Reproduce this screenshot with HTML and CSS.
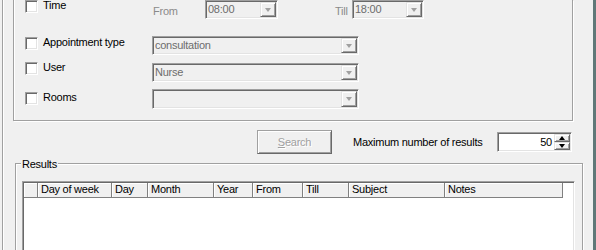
FILE: index.html
```html
<!DOCTYPE html>
<html>
<head>
  <meta charset="UTF-8">
  <title>Appointment search</title>
  <link rel="stylesheet" href="styles.css">
</head>
<body>
  <div class="dialog">
    <div class="groupbox">
      <div class="row row-time">
        <label class="option"><span class="check"></span><span class="caption">Time</span></label>
        <span class="muted from-label">From</span>
        <div class="combo w-from"><span class="value">08:00</span><span class="drop"></span></div>
        <span class="muted till-label">Till</span>
        <div class="combo w-till"><span class="value">18:00</span><span class="drop"></span></div>
      </div>
      <div class="row row-type">
        <label class="option"><span class="check"></span><span class="caption">Appointment type</span></label>
        <div class="combo w-wide"><span class="value">consultation</span><span class="drop"></span></div>
      </div>
      <div class="row row-user">
        <label class="option"><span class="check"></span><span class="caption">User</span></label>
        <div class="combo w-wide"><span class="value">Nurse</span><span class="drop"></span></div>
      </div>
      <div class="row row-rooms">
        <label class="option"><span class="check"></span><span class="caption">Rooms</span></label>
        <div class="combo w-wide"><span class="value"></span><span class="drop"></span></div>
      </div>
    </div>

    <div class="search-row">
      <button class="btn" disabled><u>S</u>earch</button>
      <span class="max-label">Maximum number of results</span>
      <div class="spin">
        <span class="spin-value">50</span>
        <span class="spin-buttons"><span class="spin-up"></span><span class="spin-down"></span></span>
      </div>
    </div>

    <fieldset class="results">
      <legend>Results</legend>
      <div class="listview">
        <div class="lv-header">
          <span class="lv-col" style="width:14px"></span>
          <span class="lv-col" style="width:74px">Day of week</span>
          <span class="lv-col" style="width:36px">Day</span>
          <span class="lv-col" style="width:66px">Month</span>
          <span class="lv-col" style="width:39px">Year</span>
          <span class="lv-col" style="width:50px">From</span>
          <span class="lv-col" style="width:46px">Till</span>
          <span class="lv-col" style="width:96px">Subject</span>
          <span class="lv-col" style="width:118px">Notes</span>
        </div>
      </div>
    </fieldset>
  </div>
</body>
</html>
```

FILE: styles.css
```css
html, body {
  height: 250px;
}
body {
  margin: 0;
  background: #f0f0f0;
  font-family: "Liberation Sans", Arial, sans-serif;
  font-size: 11px;
  letter-spacing: -0.25px;
  color: #000;
  overflow: hidden;
}
.dialog {
  margin-left: 2px;
  width: 590px;
  height: 250px;
  overflow: hidden;
  border-left: 1px solid #a0a0a0;
  border-right: 3px solid #607878;
  box-shadow: inset 1px 0 0 #fff;
}
.groupbox {
  margin-left: 10px;
  width: 560px;
  box-sizing: border-box;
  border: 1px solid #a0a0a0;
  border-top: none;
  box-shadow: inset 1px 0 0 #fff, 1px 1px 0 #fff;
  padding: 0 0 11px 11px;
}
.row {
  display: flex;
  align-items: flex-start;
}
.row-time { height: 36px; }
.row-type { height: 27px; }
.row-user { height: 26px; }
.row-rooms { height: 20px; }
.option {
  display: flex;
  align-items: flex-start;
  width: 127px;
  flex: none;
}
.row-time .option { margin-top: -1px; }
.row-user .option { margin-top: -2px; }
.row-rooms .option { margin-top: 2px; }
.check {
  width: 13px;
  height: 13px;
  box-sizing: border-box;
  margin-top: 1px;
  background: #fff;
  border: 1px solid;
  border-color: #a0a0a0 #fff #fff #a0a0a0;
  box-shadow: inset 1px 1px 0 #696969, inset -1px -1px 0 #e3e3e3;
}
.caption {
  margin-left: 5px;
  line-height: 13px;
}
.muted {
  color: #8a8a8a;
  line-height: 13px;
  margin-top: 5px;
}
.from-label {
  margin-left: 1px;
  width: 52px;
}
.till-label {
  margin-left: 57px;
  width: 17px;
}
.combo {
  display: flex;
  box-sizing: border-box;
  height: 19px;
  padding: 1px;
  border: 1px solid;
  border-color: #a0a0a0 #fff #fff #a0a0a0;
  box-shadow: inset 1px 1px 0 #696969, inset -1px -1px 0 #e3e3e3;
  color: #6d6d6d;
}
.w-from { width: 73px; }
.w-till { width: 72px; }
.w-wide { width: 207px; }
.row-rooms .combo { height: 20px; }
.combo .value {
  flex: 1;
  padding-left: 1px;
  line-height: 15px;
}
.drop, .spin-up, .spin-down {
  display: flex;
  align-items: center;
  justify-content: center;
  box-sizing: border-box;
  background: #f0f0f0;
  border: 1px solid;
  border-color: #e3e3e3 #696969 #696969 #e3e3e3;
  box-shadow: inset 1px 1px 0 #fff, inset -1px -1px 0 #a0a0a0;
}
.drop {
  width: 16px;
}
.drop::after {
  content: "";
  border-style: solid;
  border-width: 4px 3.5px 0;
  border-color: #a0a0a0 transparent transparent;
}
.search-row {
  display: flex;
  align-items: center;
  height: 24px;
  margin-top: 9px;
  padding-left: 254px;
}
.btn {
  width: 75px;
  height: 24px;
  padding: 0;
  font: inherit;
  letter-spacing: inherit;
  color: #a0a0a0;
  text-shadow: 1px 1px 0 #fff;
  background: #f0f0f0;
  border: 1px solid;
  border-color: #a0a0a0 #696969 #696969 #a0a0a0;
  box-shadow: inset 1px 1px 0 #fff, inset -1px -1px 0 #a0a0a0;
}
.max-label {
  margin-left: 21px;
  width: 144px;
}
.spin {
  display: flex;
  box-sizing: border-box;
  width: 75px;
  height: 20px;
  padding: 1px;
  background: #fff;
  border: 1px solid;
  border-color: #a0a0a0 #fff #fff #a0a0a0;
  box-shadow: inset 1px 1px 0 #696969, inset -1px -1px 0 #e3e3e3;
}
.spin-value {
  flex: 1;
  text-align: right;
  padding-right: 2px;
  line-height: 16px;
}
.spin-buttons {
  display: flex;
  flex-direction: column;
  width: 16px;
}
.spin-up, .spin-down {
  flex: 1;
}
.spin-up::after, .spin-down::after {
  content: "";
  border-style: solid;
  border-color: transparent;
}
.spin-up::after {
  border-width: 0 3.5px 4px;
  border-bottom-color: #000;
}
.spin-down::after {
  border-width: 4px 3.5px 0;
  border-top-color: #000;
}
.results {
  margin: 2px 0 0 12px;
  width: 568px;
  height: 110px;
  box-sizing: border-box;
  padding: 10px 7px 0 6px;
  border: 1px solid #a0a0a0;
  box-shadow: inset 1px 1px 0 #fff, 1px 1px 0 #fff;
}
.results legend {
  padding: 2px 1px 0;
  margin-left: -1px;
  line-height: 13px;
  background: #f0f0f0;
}
.listview {
  height: 80px;
  padding: 1px;
  background: #fff;
  border: 1px solid;
  border-color: #a0a0a0 #fff #fff #a0a0a0;
  box-shadow: inset 1px 1px 0 #696969, inset -1px -1px 0 #e3e3e3;
}
.lv-header {
  display: flex;
}
.lv-col {
  box-sizing: border-box;
  height: 15px;
  padding-left: 3px;
  line-height: 13px;
  white-space: nowrap;
  background: #f0f0f0;
  border-right: 1px solid #808080;
  border-bottom: 1px solid #808080;
  box-shadow: inset 1px 1px 0 #fff;
}
```
